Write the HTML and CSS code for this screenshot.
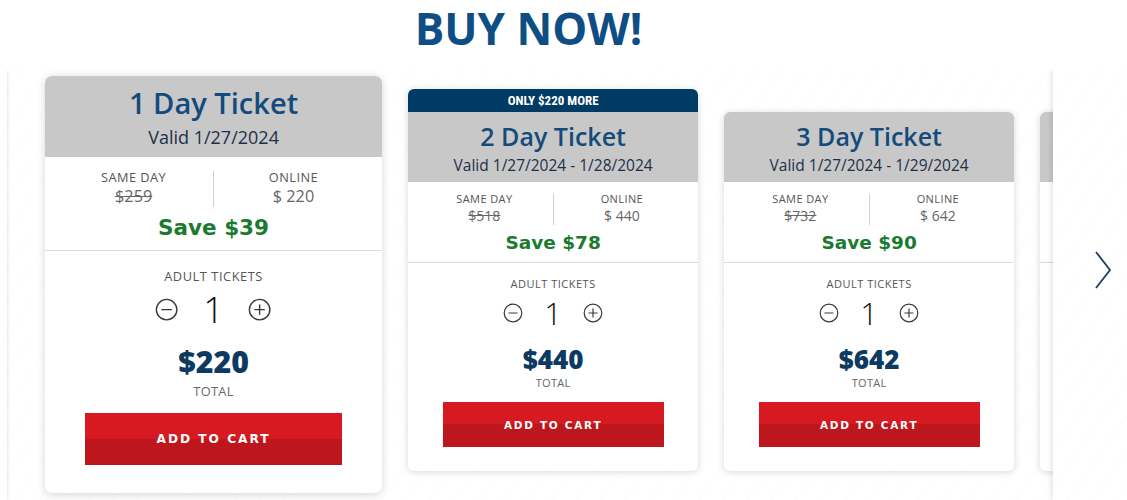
FILE: index.html
```html
<!DOCTYPE html>
<html lang="en">
  <head>
    <meta charset="UTF-8" />
    <meta name="viewport" content="width=device-width, initial-scale=1.0" />
    <title>Buy Now</title>
    <link rel="stylesheet" href="styles.css">
  </head>
  <body>
    <section class="buy">
      <h1 class="buy-title">BUY NOW!</h1>

      <div class="carousel">
        <div class="track">
          <!-- 1 day -->
          <div class="card card--active">
            <div class="card-head">
              <h2 class="card-name">1 Day Ticket</h2>
              <p class="card-valid">Valid 1/27/2024</p>
            </div>
            <div class="card-prices">
              <div class="price-col">
                <span class="price-label">SAME DAY</span>
                <s class="price-old">$259</s>
              </div>
              <div class="price-divider"></div>
              <div class="price-col">
                <span class="price-label">ONLINE</span>
                <span class="price-online">$ 220</span>
              </div>
              <p class="price-save">Save $39</p>
            </div>
            <div class="card-body">
              <span class="qty-label">ADULT TICKETS</span>
              <div class="qty">
                <button class="qty-btn" aria-label="Remove ticket">
                  <svg viewBox="0 0 20 20"><circle cx="10" cy="10" r="8.8" /><path d="M5.5 10h9" /></svg>
                </button>
                <span class="qty-value">1</span>
                <button class="qty-btn" aria-label="Add ticket">
                  <svg viewBox="0 0 20 20"><circle cx="10" cy="10" r="8.8" /><path d="M5.5 10h9M10 5.5v9" /></svg>
                </button>
              </div>
              <span class="total">$220</span>
              <span class="total-label">TOTAL</span>
              <button class="cart-btn">ADD TO CART</button>
            </div>
          </div>

          <!-- 2 day -->
          <div class="card">
            <div class="card-badge">ONLY $220 MORE</div>
            <div class="card-head">
              <h2 class="card-name">2 Day Ticket</h2>
              <p class="card-valid">Valid 1/27/2024 - 1/28/2024</p>
            </div>
            <div class="card-prices">
              <div class="price-col">
                <span class="price-label">SAME DAY</span>
                <s class="price-old">$518</s>
              </div>
              <div class="price-divider"></div>
              <div class="price-col">
                <span class="price-label">ONLINE</span>
                <span class="price-online">$ 440</span>
              </div>
              <p class="price-save">Save $78</p>
            </div>
            <div class="card-body">
              <span class="qty-label">ADULT TICKETS</span>
              <div class="qty">
                <button class="qty-btn" aria-label="Remove ticket">
                  <svg viewBox="0 0 20 20"><circle cx="10" cy="10" r="8.8" /><path d="M5.5 10h9" /></svg>
                </button>
                <span class="qty-value">1</span>
                <button class="qty-btn" aria-label="Add ticket">
                  <svg viewBox="0 0 20 20"><circle cx="10" cy="10" r="8.8" /><path d="M5.5 10h9M10 5.5v9" /></svg>
                </button>
              </div>
              <span class="total">$440</span>
              <span class="total-label">TOTAL</span>
              <button class="cart-btn">ADD TO CART</button>
            </div>
          </div>

          <!-- 3 day -->
          <div class="card">
            <div class="card-head">
              <h2 class="card-name">3 Day Ticket</h2>
              <p class="card-valid">Valid 1/27/2024 - 1/29/2024</p>
            </div>
            <div class="card-prices">
              <div class="price-col">
                <span class="price-label">SAME DAY</span>
                <s class="price-old">$732</s>
              </div>
              <div class="price-divider"></div>
              <div class="price-col">
                <span class="price-label">ONLINE</span>
                <span class="price-online">$ 642</span>
              </div>
              <p class="price-save">Save $90</p>
            </div>
            <div class="card-body">
              <span class="qty-label">ADULT TICKETS</span>
              <div class="qty">
                <button class="qty-btn" aria-label="Remove ticket">
                  <svg viewBox="0 0 20 20"><circle cx="10" cy="10" r="8.8" /><path d="M5.5 10h9" /></svg>
                </button>
                <span class="qty-value">1</span>
                <button class="qty-btn" aria-label="Add ticket">
                  <svg viewBox="0 0 20 20"><circle cx="10" cy="10" r="8.8" /><path d="M5.5 10h9M10 5.5v9" /></svg>
                </button>
              </div>
              <span class="total">$642</span>
              <span class="total-label">TOTAL</span>
              <button class="cart-btn">ADD TO CART</button>
            </div>
          </div>

          <!-- next card, only its edge peeks out under the fade -->
          <div class="card card--peek" aria-hidden="true">
            <div class="card-head"></div>
            <div class="card-prices card-prices--empty"></div>
            <div class="card-body card-body--empty"></div>
          </div>
        </div>

        <div class="fade fade--left"></div>
        <div class="fade fade--right">
          <button class="next-btn" aria-label="Next">
            <svg viewBox="0 0 20 40"><path d="M3 2l14 18L3 38" /></svg>
          </button>
        </div>
      </div>
    </section>
  </body>
</html>
```

FILE: styles.css
```css
* {
  box-sizing: border-box;
}

body {
  margin: 0;
  padding: 0;
  font-family: "Open Sans", "Liberation Sans", sans-serif;
  background: #fff;
  overflow: hidden;
}

.buy {
  height: 500px;
  background:
    repeating-linear-gradient(125deg, rgba(0, 0, 0, 0) 0 18px, rgba(0, 0, 0, 0.009) 18px 20px),
    #fff;
}

.buy-title {
  margin: 0;
  height: 70px;
  padding: 1px 70px 0 0;
  text-align: center;
  font-size: 44px;
  line-height: 54px;
  font-weight: 700;
  color: #0f4e84;
  background: #fff;
}

.carousel {
  position: relative;
  height: 430px;
  overflow: hidden;
}

.track {
  display: flex;
  align-items: flex-end;
  gap: 26px;
  height: 401px;
  padding-left: 45px;
}

/* cards */

.card {
  flex: 0 0 290px;
  width: 290px;
  background: #fff;
  border-radius: 6px;
  box-shadow: 0 1px 7px rgba(0, 0, 0, 0.16);
  text-align: center;
  overflow: hidden;
}

.card--active {
  zoom: 1.1625;
  margin-bottom: -19px;
}

.card-badge {
  height: 23px;
  background: #003b65;
  color: #fff;
  font-family: "Liberation Sans Narrow", "Roboto", sans-serif;
  font-stretch: condensed;
  font-weight: 700;
  font-size: 13px;
  line-height: 23px;
}

.card-head {
  height: 70px;
  padding: 9px 0 7px;
  background: #c8c8c8;
}

.card-name {
  margin: 0;
  font-size: 25px;
  line-height: 30px;
  font-weight: 600;
  color: #134b7c;
}

.card-valid {
  margin: 4px 0 0;
  font-size: 15.5px;
  line-height: 20px;
  color: #1e3049;
}

.card-prices {
  display: grid;
  grid-template-columns: 1fr 1px 1fr;
  padding: 10px 8px 7px;
  border-bottom: 1px solid #dcdcdc;
}

.card-prices--empty {
  height: 81px;
}

.price-col {
  display: flex;
  flex-direction: column;
}

.price-label {
  font-size: 11px;
  line-height: 14px;
  letter-spacing: 0.4px;
  color: #555;
}

.price-old,
.price-online {
  margin-top: 1px;
  font-size: 14px;
  line-height: 18px;
  color: #666;
}

.price-divider {
  margin: 2px 0 0;
  background: #d0d0d0;
}

.price-save {
  grid-column: 1 / -1;
  margin: 6px 0 0;
  font-family: "DejaVu Sans", sans-serif;
  font-weight: 700;
  font-size: 18.5px;
  line-height: 24px;
  color: #1a7a2e;
}

.card-body {
  display: flex;
  flex-direction: column;
  align-items: center;
  padding: 14px 0 24px;
}

.card-body--empty {
  height: 208px;
}

.qty-label {
  font-size: 11px;
  line-height: 14px;
  letter-spacing: 0.5px;
  color: #555;
}

.qty {
  display: flex;
  align-items: center;
  gap: 20px;
  height: 36px;
  margin-top: 4px;
}

.qty-btn {
  width: 20px;
  height: 20px;
  padding: 0;
  border: none;
  background: none;
  cursor: pointer;
}

.qty-btn svg {
  display: block;
  width: 20px;
  height: 20px;
  fill: none;
  stroke: #3a3a3a;
  stroke-width: 1.2;
}

.qty-value {
  width: 20px;
  font-size: 31px;
  line-height: 36px;
  font-weight: 300;
  color: #111;
}

.total {
  margin-top: 13px;
  font-size: 26px;
  line-height: 30px;
  font-weight: 800;
  color: #0d3a60;
}

.total-label {
  margin-top: 2px;
  font-size: 11px;
  line-height: 14px;
  letter-spacing: 0.3px;
  color: #666;
}

.cart-btn {
  width: 221px;
  height: 45px;
  margin-top: 12px;
  border: none;
  background: linear-gradient(#d71a21 0 50%, #bd161d 50% 100%);
  color: #fff;
  font-family: "DejaVu Sans", sans-serif;
  font-weight: 700;
  font-size: 10.5px;
  letter-spacing: 1.7px;
  cursor: pointer;
}

/* side fades */

.fade {
  position: absolute;
  top: 0;
  bottom: 0;
  background:
    repeating-linear-gradient(125deg, rgba(0, 0, 0, 0) 0 18px, rgba(0, 0, 0, 0.009) 18px 20px),
    #fff;
}

.fade--left {
  left: 0;
  width: 7px;
  box-shadow: 1px 0 3px rgba(0, 0, 0, 0.1);
}

.fade--right {
  right: 0;
  width: 74px;
  box-shadow: -2px 0 5px rgba(0, 0, 0, 0.1);
}

.next-btn {
  position: absolute;
  top: 180px;
  left: 40px;
  width: 20px;
  height: 40px;
  padding: 0;
  border: none;
  background: none;
  cursor: pointer;
}

.next-btn svg {
  display: block;
  width: 20px;
  height: 40px;
  fill: none;
  stroke: #1d3c5e;
  stroke-width: 1.8;
}
```
